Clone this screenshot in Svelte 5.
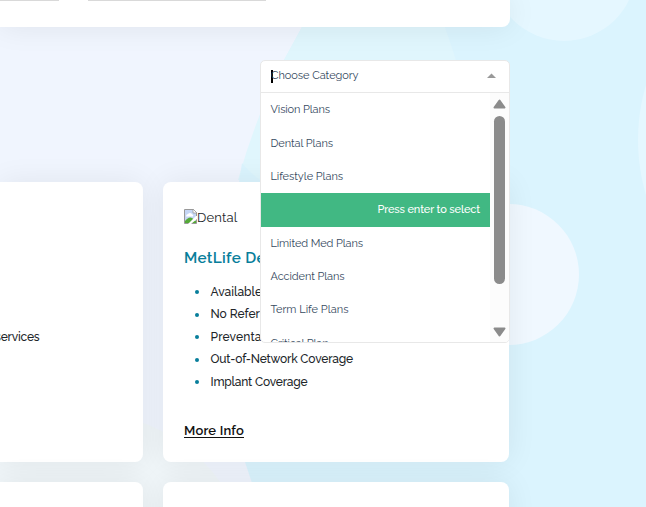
<script>
  const plans = ['Vision Plans', 'Dental Plans', 'Lifestyle Plans', null, 'Limited Med Plans', 'Accident Plans', 'Term Life Plans', 'Critical Plan'];
  const planWidths = [59.5, 62.5, 72.5, 0, 92.5, 74, 78, 58];
  const benefits = [
    { text: 'Available Nationwide', width: 119 },
    { text: 'No Referrals Needed', width: 118 },
    { text: 'Preventative Services', width: 124 },
    { text: 'Out-of-Network Coverage', width: 142.5 },
    { text: 'Implant Coverage', width: 97 }
  ];

  // Adjusts tracking so that a label occupies its intended width.
  function fit(node, width) {
    const natural = node.getBoundingClientRect().width;
    node.style.letterSpacing = `${(width - natural) / node.textContent.length}px`;
  }
</script>

<div class="page">
  <svg class="backdrop" viewBox="0 0 646 507" aria-hidden="true">
    <rect width="646" height="507" fill="#dbf4fe" />
    <path d="M0 0H315L302 27L284 60Q256 116 240 180Q213 330 245 462L260 507H0Z" fill="#f0f5fe" />
    <path d="M315 0L302 27L284 60Q256 116 238 180H456V60L445 27L430 0Z" fill="#e0f6fd" />
    <path d="M445 27Q454 48 456 60V65H510V27Z" fill="#dbf4fe" />
    <path d="M242 163Q249 172 260 180V190H238Z" fill="#dbf4fe" />
    <circle cx="84" cy="580" r="168" fill="#f0f6f9" />
    <circle cx="564" cy="-31" r="72" fill="#e5f7ff" />
    <circle cx="831" cy="140" r="193" fill="#e5f7ff" />
    <circle cx="508.5" cy="274.5" r="70.5" fill="#f0f8ff" />
  </svg>

  <header class="filters"><span class="field first"></span><span class="field"></span></header>

  <section class="toolbar">
    <div class="select">
      <div class="control">
        <i class="caret"></i><span use:fit={87.5}>Choose Category</span>
        <svg class="arrow" width="9" height="5" viewBox="0 0 9 5"><path d="M0 5L4.5 0.5L9 5Z" fill="#999" /></svg>
      </div>
      <div class="menu">
        <ul class="options">
          {#each plans as plan, i}
            {#if plan}
              <li><span use:fit={planWidths[i]}>{plan}</span></li>
            {:else}
              <li class="active"><span use:fit={102.5}>Press enter to select</span></li>
            {/if}
          {/each}
        </ul>
        <div class="scrollbar">
          <svg width="13" height="10" viewBox="0 0 13 10"><path d="M6.5 1.5L11.5 8.5H1.5Z" fill="#8b8b8b" stroke="#8b8b8b" stroke-width="2" stroke-linejoin="round" /></svg>
          <i class="thumb"></i>
          <svg class="down" width="13" height="10" viewBox="0 0 13 10"><path d="M1.5 1.5H11.5L6.5 8.5Z" fill="#8b8b8b" stroke="#8b8b8b" stroke-width="2" stroke-linejoin="round" /></svg>
        </div>
      </div>
    </div>
  </section>

  <main class="cards">
    <article class="card left"><p><span use:fit={44.5}>services</span></p></article>
    <article class="card plan">
      <div class="picture">
        <svg width="13" height="15" viewBox="0 0 13 15">
          <path d="M.5.5H9L12.5 4V14.5H.5Z" fill="#c5d6f5" stroke="#999" />
          <path d="M2 7.5Q2 5 4 5Q6 3 8 5Q10 6 9 7.5Z" fill="#fff" />
          <path d="M1 14V12Q5 7 8 9L12 12V14Z" fill="#55aa38" />
          <path d="M9 0V4H13Z" fill="#fff" stroke="#999" stroke-width=".8" />
          <path d="M13 7V10L7 15H4L12 7Z" fill="#fff" />
        </svg><span use:fit={40.5}>Dental</span>
      </div>
      <h2><span use:fit={111}>MetLife Dental</span></h2>
      <ul class="benefits">
        {#each benefits as b}<li><span use:fit={b.width}>{b.text}</span></li>{/each}
      </ul>
      <a href="#info"><span use:fit={60}>More Info</span></a>
    </article>
    <article class="card left"></article>
    <article class="card"></article>
  </main>
</div>

<style>
  :global(body) { margin: 0; }
  .page { position: relative; height: 507px; overflow: hidden; font-family: Raleway, Lato, sans-serif; color: #212529; isolation: isolate; }
  .page, .page * { box-sizing: border-box; }
  span { white-space: nowrap; }
  .backdrop { position: absolute; inset: 0; width: 646px; height: 507px; z-index: -1; }
  .filters { width: 510px; height: 27px; background: #fff; border-radius: 0 0 8px 0; box-shadow: 0 0 30px rgba(0,0,0,.08); display: flex; gap: 29px; }
  .field { width: 178px; height: 1px; background: #d9d9d9; }
  .field.first { width: 59px; }
  .toolbar { height: 155px; padding: 33px 0 0 260px; position: relative; z-index: 2; }
  .select { width: 250px; height: 283px; border: 1px solid #e8e8e8; border-radius: 5px; background: #fff; overflow: hidden; font-size: 11px; color: #35495e; }
  .control { height: 32px; display: flex; align-items: center; padding: 0 13px 3px 10px; border-bottom: 1px solid #e8e8e8; }
  .caret { width: 2px; height: 13px; background: #000; margin: 2px -2px 0 0; }
  .arrow { margin-left: auto; width: 9px; height: 5px; }
  .menu { display: flex; height: 249px; }
  ul { list-style: none; margin: 0; padding: 0; }
  .options { width: 229px; height: 249px; overflow: hidden; }
  .options li { height: 33.3px; padding: 0 10px 0 9.5px; display: flex; align-items: center; }
  .options li:first-child, .options .active ~ li { padding-bottom: 1px; }
  .options li:nth-child(2) { padding-top: 1px; }
  .options li:last-child { padding-bottom: 0; }
  .options .active { justify-content: flex-end; color: #fff; background: #41b883; height: 34px; font-weight: 500; padding-bottom: 1px; }
  .scrollbar { width: 19px; background: #fcfcfc; display: flex; flex-direction: column; align-items: center; padding: 6px 0 5px; }
  .thumb { width: 11px; height: 168px; margin-top: 7px; border-radius: 6px; background: #8b8b8b; }
  .down { margin-top: auto; }
  .cards { display: grid; grid-template: 280px 280px / 143px 346px; gap: 20px; }
  .card { background: #fff; border-radius: 8px; box-shadow: 0 0 30px rgba(0,0,0,.07); }
  .left { border-radius: 0 8px 8px 0; }
  .left p { margin: 0; padding-top: 144px; margin-left: -5px; font-size: 12px; line-height: 22px; font-weight: 500; }
  .plan { padding: 27px 21px; }
  .picture { height: 20px; display: flex; align-items: flex-start; font-size: 13px; line-height: 20px; }
  .picture span { margin-top: -1px; }
  h2 { margin: 18px 0 0; font-size: 15.3px; line-height: 22px; font-weight: 600; color: #087e9b; }
  .benefits { margin-top: 11.6px; padding-left: 11px; font-size: 12px; font-weight: 500; }
  .benefits li { display: flex; align-items: center; height: 22.5px; }
  .benefits li::before { content: ''; width: 4px; height: 4px; border-radius: 50%; background: #087e9b; margin: 1px 11.5px 0 0; }
  a { display: inline-block; margin-top: 27.9px; font-size: 13px; line-height: 20px; font-weight: 600; color: #111; text-decoration: underline; text-underline-offset: 2px; }
</style>
